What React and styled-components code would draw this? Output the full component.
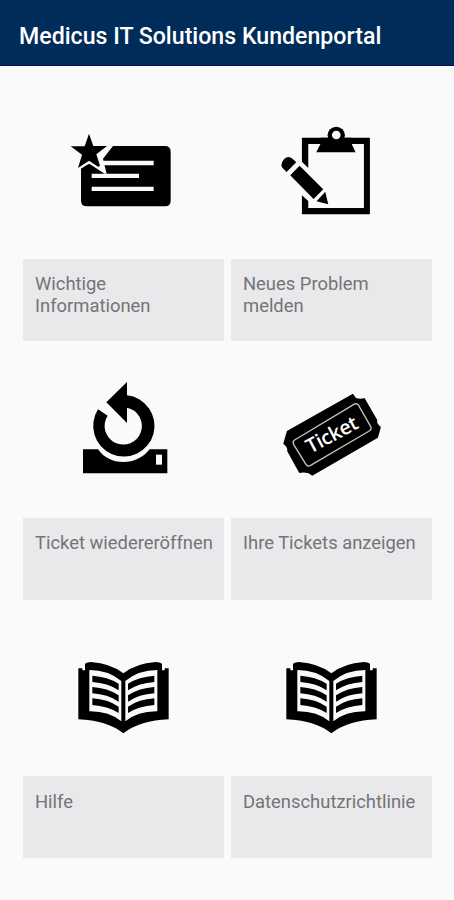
import styled, { createGlobalStyle } from 'styled-components';

const GlobalStyle = createGlobalStyle`
  body {
    margin: 0;
    background: #fafafa;
    font-family: Roboto, 'Liberation Sans', sans-serif;
  }
`;

const Page = styled.div`
  min-height: 900px;
  background: #fafafa;
`;

const Header = styled.header`
  box-sizing: border-box;
  height: 66px;
  padding: 7px 19px 0;
  display: flex;
  align-items: center;
  background: #002c5a;
  border-bottom: 1px solid #06104a;
`;

const Title = styled.h1`
  margin: 0;
  color: #fff;
  font-size: 23.15px;
  font-weight: 500;
  white-space: nowrap;
`;

const Grid = styled.main`
  display: grid;
  grid-template-columns: 1fr 1fr;
  column-gap: 7px;
  padding: 16px 22px 0 23px;
`;

const Tile = styled.a`
  display: flex;
  flex-direction: column;
  height: 258.8px;
`;

const Picture = styled.div`
  flex: 1;
  display: flex;
  align-items: center;
  justify-content: center;
`;

const Icon = styled.svg`
  width: 120px;
  height: 120px;
  fill: #000;
`;

const Label = styled.div`
  box-sizing: border-box;
  height: 82px;
  padding: 14.4px 10px 0 12px;
  background: #e9e9eb;
  color: #747476;
  font-size: 18.4px;
  line-height: 22px;
`;

const TicketText = styled.text`
  fill: #fff;
  font-family: 'Open Sans', 'Noto Sans', sans-serif;
  font-size: 60px;
  font-weight: 600;
`;

function InfoIcon() {
  return (
    <Icon viewBox="11 -30 360 360">
      <path d="M158 78H314Q331 78 331 95V242Q331 259 314 259H80Q62 259 62 242V143L87 131L139 162L128 116Z" />
      <path fill="#fafafa" d="M124 122H280V136H128ZM94 161H236V174H94ZM94 200H280V213H94Z" />
      <path
        stroke="#fafafa"
        strokeWidth="14"
        paintOrder="stroke"
        d="M86 41L99 78H140L108 103L122 146L86 122L53 144L65 104L31 79H73Z"
      />
      <path fill="#fafafa" d="M124 137L139 163L119 151L114 139Z" />
    </Icon>
  );
}

function ReportIcon() {
  return (
    <Icon viewBox="5.25 -15 360 360">
      <path d="M95 68H299V298H95V241L114 258V279H281V87H114V159L95 140Z" />
      <path d="M151 86V68H244V86L256 112H138Z" />
      <circle cx="198" cy="61" r="26" />
      <circle cx="198" cy="60" r="13" fill="#fafafa" />
      <path d="M35 143Q40 130 53 126Q62 125 78 142L49 171L37 159Q31 152 35 143Z" />
      <path d="M88 152L159 223L130 252L60 181ZM165 230L174 268L139 259Z" />
    </Icon>
  );
}

function ReopenIcon() {
  return (
    <Icon viewBox="-18 -18 360 360">
      <path d="M39 223H84C102 249 129 261 160 261S218 249 239 223H292V295H39Z" />
      <path fill="#fafafa" d="M258 239H276V269H258Z" />
      <path d="M171 21V61A92 92 0 1 1 84 103L113 122A56 56 0 1 0 171 98V144L109 82Z" />
    </Icon>
  );
}

function TicketIcon() {
  return (
    <Icon viewBox="5.25 -48 360 360">
      <path d="M50 138L248 26L257 39Q270 44 283 39L321 105Q318 116 332 126L323 158L126 272L115 265Q102 261 87 264L51 199Q53 186 39 176Z" />
      <path
        fill="none"
        stroke="#c4c4c4"
        strokeWidth="4"
        d="M73 165L251 58Q260 53 265 61L301 124Q306 133 297 138L121 241Q112 246 107 238L70 178Q66 169 73 165Z"
      />
      <TicketText transform="translate(121 206) rotate(-28)" textLength="167">
        Ticket
      </TicketText>
    </Icon>
  );
}

function BookIcon() {
  return (
    <Icon viewBox="-3 -66 360 360">
      <path d="M40 55H52V61H60V41Q66 36 78 36Q137 40 175 70Q213 40 272 36Q285 36 291 41V61H299V55H311V208Q226 211 175 250Q125 211 40 208Z" />
      <path fill="#fafafa" d="M73 60Q130 60 169 93V214Q131 183 73 184ZM277 60Q220 60 181 93V214Q219 183 277 184Z" />
      {/* text lines on both pages */}
      <path d="M82 77Q128 80 161 101V121Q128 99 82 96ZM82 111Q128 114 161 136V155Q128 133 82 130ZM82 145Q128 148 161 170V189Q128 168 82 165Z" />
      <path d="M268 77Q222 80 189 101V121Q222 99 268 96ZM268 111Q222 114 189 136V155Q222 133 268 130ZM268 145Q222 148 189 170V189Q222 168 268 165Z" />
    </Icon>
  );
}

const items = [
  { label: 'Wichtige Informationen', icon: InfoIcon },
  { label: 'Neues Problem melden', icon: ReportIcon },
  { label: 'Ticket wiedereröffnen', icon: ReopenIcon },
  { label: 'Ihre Tickets anzeigen', icon: TicketIcon },
  { label: 'Hilfe', icon: BookIcon },
  { label: 'Datenschutzrichtlinie', icon: BookIcon },
];

function App() {
  return (
    <>
      <GlobalStyle />
      <Page>
        <Header>
          <Title>Medicus IT Solutions Kundenportal</Title>
        </Header>
        <Grid>
          {items.map(({ label, icon: ItemIcon }) => (
            <Tile key={label}>
              <Picture>
                <ItemIcon />
              </Picture>
              <Label>{label}</Label>
            </Tile>
          ))}
        </Grid>
      </Page>
    </>
  );
}

export default App;
